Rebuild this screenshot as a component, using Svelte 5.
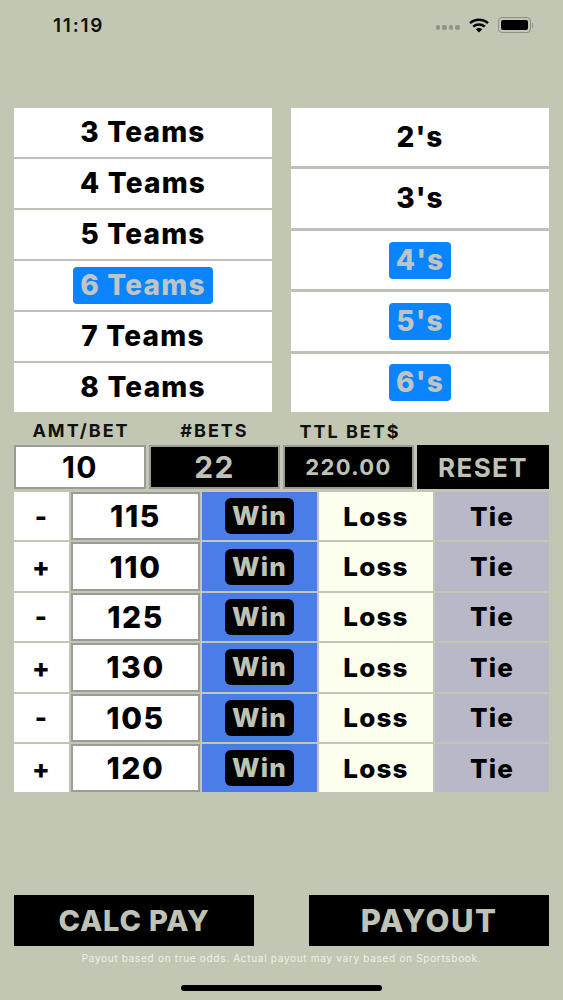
<script>
	const teams = ['3 Teams', '4 Teams', '5 Teams', '6 Teams', '7 Teams', '8 Teams'];
	const combos = ["2's", "3's", "4's", "5's", "6's"];
	const selectedTeam = '6 Teams';
	const selectedCombos = ["4's", "5's", "6's"];

	const rows = [
		{ sign: '-', odds: 115 },
		{ sign: '+', odds: 110 },
		{ sign: '-', odds: 125 },
		{ sign: '+', odds: 130 },
		{ sign: '-', odds: 105 },
		{ sign: '+', odds: 120 }
	];
</script>

<div class="screen">
	<div class="statusbar">
		<span class="time">11:19</span>
		<div class="status-icons">
			<div class="signal">
				<i></i><i></i><i></i><i></i>
			</div>
			<svg width="20" height="15" viewBox="0 0 20 15">
				<path d="M1 5.2C6 .6 14 .6 19 5.2" fill="none" stroke="#000" stroke-width="2.4" />
				<path d="M4.2 8.6C7.4 5.7 12.6 5.7 15.8 8.6" fill="none" stroke="#000" stroke-width="2.4" />
				<path d="M6.8 11.2C8.6 9.6 11.4 9.6 13.2 11.2L10 14.6Z" fill="#000" />
			</svg>
			<div class="battery">
				<div class="battery-fill"></div>
			</div>
			<div class="battery-cap"></div>
		</div>
	</div>

	<div class="pickers">
		<div class="picker">
			{#each teams as team}
				<div class="pick">
					<span class="pick-label" class:on={team === selectedTeam}>{team}</span>
				</div>
			{/each}
		</div>
		<div class="picker combos">
			{#each combos as combo}
				<div class="pick">
					<span class="pick-label" class:on={selectedCombos.includes(combo)}>{combo}</span>
				</div>
			{/each}
		</div>
	</div>

	<div class="labels">
		<span class="label amt">AMT/BET</span>
		<span class="label bets">#BETS</span>
		<span class="label ttl">TTL BET$</span>
	</div>

	<div class="totals">
		<div class="field light">10</div>
		<div class="field dark">22</div>
		<div class="field dark small">220.00</div>
		<div class="field reset">RESET</div>
	</div>

	<div class="grid">
		{#each rows as row}
			<div class="sign">{row.sign}</div>
			<div class="odds">{row.odds}</div>
			<div class="win"><span>Win</span></div>
			<div class="loss">Loss</div>
			<div class="tie">Tie</div>
		{/each}
	</div>

	<div class="spacer"></div>

	<div class="actions">
		<div class="action calc">CALC PAY</div>
		<div class="action payout">PAYOUT</div>
	</div>
	<p class="note">Payout based on true odds. Actual payout may vary based on Sportsbook.</p>
	<div class="home-wrap"><div class="home"></div></div>
</div>

<style>
	:global(body) {
		margin: 0;
		background: #c1c7b3;
	}

	.screen {
		width: 563px;
		height: 1000px;
		box-sizing: border-box;
		display: flex;
		flex-direction: column;
		padding: 0 14px;
		background: #c1c7b3;
		font-family: Inter, 'Liberation Sans', Arial, sans-serif;
		font-weight: 800;
		color: #000;
		overflow: hidden;
	}

	.statusbar {
		height: 108px;
		flex: none;
		display: flex;
		align-items: flex-start;
		justify-content: space-between;
		padding: 15px 0 0 39px;
		box-sizing: border-box;
	}

	.time {
		font-size: 19px;
		font-weight: 600;
		line-height: 22px;
		letter-spacing: 1.8px;
		color: #111;
	}

	.status-icons {
		display: flex;
		align-items: center;
		margin: 2px 16px 0 0;
	}

	.signal {
		display: flex;
		gap: 2px;
		margin: 5px 9px 0 0;
	}

	.signal i {
		width: 4.5px;
		height: 4.5px;
		border-radius: 50%;
		background: #8f9488;
	}

	.battery {
		width: 27px;
		height: 10px;
		margin-left: 9px;
		padding: 2px;
		box-sizing: content-box;
		border: 1px solid #8b8f84;
		border-radius: 4px;
	}

	.battery-fill {
		width: 100%;
		height: 100%;
		background: #000;
		border-radius: 2px;
	}

	.battery-cap {
		width: 1.5px;
		height: 5px;
		margin-left: 1px;
		background: #8b8f84;
	}

	.pickers {
		display: flex;
		justify-content: space-between;
		flex: none;
		height: 304px;
	}

	.picker {
		width: 258px;
		display: flex;
		flex-direction: column;
		gap: 2px;
		background: #bfc0b8;
	}

	.combos {
		gap: 3px;
	}

	.pick {
		flex: 1;
		display: flex;
		align-items: center;
		justify-content: center;
		background: #fff;
	}

	.pick-label {
		font-size: 28px;
		line-height: 37px;
		letter-spacing: 1.2px;
		padding: 0 7px;
		border-radius: 4px;
	}

	.pick-label.on {
		background: #0a84ff;
		color: #bfc5c4;
	}

	.labels {
		flex: none;
		height: 33px;
		display: grid;
		grid-template-columns: 135px 135px 133px;
		align-items: center;
		font-size: 18px;
		font-weight: 700;
		letter-spacing: 2px;
		color: #111;
		text-align: center;
	}

	.label.amt {
		padding-right: 1px;
		margin-top: 4px;
	}

	.label.bets {
		padding-right: 4px;
		margin-top: 4px;
	}

	.label.ttl {
		padding-right: 1px;
		margin-top: 6px;
	}

	.totals {
		flex: none;
		display: grid;
		grid-template-columns: 132px 131px 131px 132px;
		gap: 3px;
		height: 44px;
		margin-bottom: 3px;
	}

	.field {
		box-sizing: border-box;
		display: flex;
		align-items: center;
		justify-content: center;
		border: 2px solid #9a9c96;
		font-size: 30px;
		font-weight: 700;
		letter-spacing: 1.4px;
	}

	.light {
		background: #fff;
		color: #000;
	}

	.dark {
		background: #000;
		color: #bfc3b6;
	}

	.small {
		font-size: 22px;
	}

	.reset {
		background: #000;
		color: #bfc3b6;
		border: none;
		font-size: 26px;
	}

	.grid {
		flex: none;
		display: grid;
		grid-template-columns: 55px 129px 115px 114px 114px;
		grid-auto-rows: 48.4px;
		row-gap: 2px;
		column-gap: 2px;
		font-size: 26px;
		letter-spacing: 1.2px;
	}

	.grid > div {
		display: flex;
		align-items: center;
		justify-content: center;
	}

	.sign {
		background: #fff;
	}

	.grid .odds {
		background: #fff;
		box-sizing: border-box;
		border: 2px solid #9a9c96;
		font-size: 30px;
		letter-spacing: 1.6px;
	}

	.win {
		background: #4a7de8;
	}

	.win span {
		background: #000;
		color: #bfc3b6;
		padding: 3px 7px;
		border-radius: 6px;
		line-height: 30px;
	}

	.loss {
		background: #fcfeee;
	}

	.tie {
		background: #b8b8c9;
	}

	.spacer {
		flex: 1;
	}

	.actions {
		flex: none;
		display: flex;
		justify-content: space-between;
	}

	.action {
		width: 240px;
		height: 51px;
		display: flex;
		align-items: center;
		justify-content: center;
		background: #000;
		color: #bfc3b6;
		font-size: 29px;
		letter-spacing: 0.8px;
		box-sizing: border-box;
	}

	.payout {
		font-size: 31px;
		letter-spacing: 1.4px;
	}

	.note {
		flex: none;
		margin: 5px 0 0;
		font-size: 10px;
		font-weight: 400;
		line-height: 14px;
		letter-spacing: 0.7px;
		text-align: center;
		color: #eef0e6;
	}

	.home-wrap {
		flex: none;
		height: 35px;
		display: flex;
		justify-content: center;
		padding-top: 20px;
		box-sizing: border-box;
	}

	.home {
		width: 201px;
		height: 6px;
		background: #000;
		border-radius: 3px;
	}
</style>
